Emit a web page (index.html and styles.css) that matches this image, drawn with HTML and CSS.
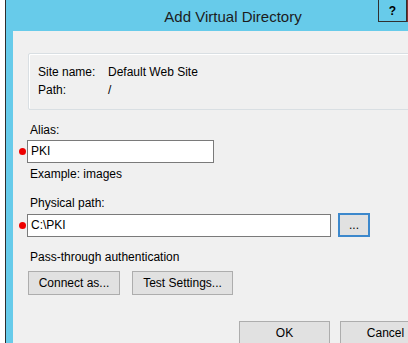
FILE: index.html
```html
<!DOCTYPE html>
<html lang="en">
<head>
    <meta charset="UTF-8">
    <title>Add Virtual Directory</title>
    <link rel="stylesheet" href="styles.css">
</head>
<body>

    <div class="window">
        <div class="titlebar">
            <span class="title">Add Virtual Directory</span>
            <div class="caption-buttons">
                <div class="help-button">?</div>
                <div class="close-button"></div>
            </div>
        </div>

        <div class="client">
            <div class="groupbox">
                <div class="info-row"><span class="info-label">Site name:</span><span>Default Web Site</span></div>
                <div class="info-row"><span class="info-label">Path:</span><span>/</span></div>
            </div>

            <div class="label alias-label">Alias:</div>
            <div class="field-row">
                <span class="marker"></span>
                <div class="textbox alias-box">PKI</div>
            </div>
            <div class="label example">Example: images</div>

            <div class="label path-label">Physical path:</div>
            <div class="field-row">
                <span class="marker"></span>
                <div class="textbox path-box">C:\PKI</div>
                <div class="button browse-button">...</div>
            </div>

            <div class="label auth-label">Pass-through authentication</div>
            <div class="auth-buttons">
                <div class="button connect-button">Connect as...</div>
                <div class="button test-button">Test Settings...</div>
            </div>

            <div class="dialog-buttons">
                <div class="button dialog-button">OK</div>
                <div class="button dialog-button">Cancel</div>
            </div>
        </div>
    </div>

</body>
</html>
```

FILE: styles.css
```css
html {
    overflow: hidden;
}

body {
    margin: 0;
    background-color: #ffffff;
    font-family: "Liberation Sans", Arial, sans-serif;
    font-size: 12px;
    color: #000000;
    overflow: hidden;
    width: 408px;
    height: 343px;
}

.window {
    margin-left: 5px;
    width: 454px;
    height: 400px;
    background-color: #67cbea;
    border-left: 1px solid #2e2e2e;
    position: relative;
}

.titlebar {
    height: 31px;
    display: flex;
    justify-content: center;
    align-items: center;
}

.title {
    font-size: 15px;
    color: #1c1c1c;
    margin-top: 1px;
}

.caption-buttons {
    position: absolute;
    top: -1px;
    left: 372px;
    display: flex;
}

.help-button {
    width: 29px;
    height: 23px;
    border: 1px solid #303030;
    box-sizing: border-box;
    display: flex;
    justify-content: center;
    align-items: center;
    font-weight: bold;
    font-size: 12px;
    padding-top: 1px;
}

.close-button {
    width: 46px;
    height: 23px;
    background-color: #c75050;
    border: 1px solid #803030;
    box-sizing: border-box;
}

.client {
    margin-left: 7px;
    margin-right: 7px;
    height: 369px;
    background-color: #f0f0f0;
    padding-left: 14px;
    padding-right: 22px;
    padding-top: 22px;
    box-sizing: border-box;
    display: flex;
    flex-direction: column;
    align-items: flex-start;
}

.groupbox {
    align-self: stretch;
    margin-left: 1px;
    height: 57px;
    box-sizing: border-box;
    border: 1px solid #d9dfe3;
    box-shadow: inset 1px 1px 0 #ffffff;
    border-radius: 2px;
    padding: 9px 0 0 9px;
}

.info-row {
    display: flex;
    line-height: 18px;
}

.info-label {
    width: 70px;
}

.label {
    line-height: 16px;
    padding-left: 3px;
}

.alias-label {
    margin-top: 12px;
}

.example {
    margin-top: 3px;
}

.path-label {
    margin-top: 13px;
}

.auth-label {
    margin-top: 12px;
}

.field-row {
    display: flex;
    align-items: center;
    margin-left: -8px;
    margin-top: 2px;
}

.marker {
    width: 7px;
    height: 7px;
    border-radius: 50%;
    background-color: #ee0000;
    margin-right: 1px;
}

.textbox {
    height: 23px;
    box-sizing: border-box;
    border: 1px solid #7a7a7a;
    background-color: #ffffff;
    padding-left: 3px;
    line-height: 21px;
}

.alias-box {
    width: 187px;
}

.path-box {
    width: 304px;
}

.button {
    box-sizing: border-box;
    background-color: #e1e1e1;
    border: 1px solid #adadad;
    display: flex;
    justify-content: center;
    align-items: center;
}

.browse-button {
    width: 32px;
    height: 24px;
    margin-left: 7px;
    border: 2px solid #3c88cc;
}

.auth-buttons {
    display: flex;
    gap: 12px;
    margin-top: 6px;
    margin-left: 1px;
}

.connect-button {
    width: 92px;
    height: 24px;
}

.test-button {
    width: 101px;
    height: 24px;
}

.dialog-buttons {
    align-self: stretch;
    display: flex;
    justify-content: flex-end;
    gap: 10px;
    margin-top: 26px;
}

.dialog-button {
    width: 91px;
    height: 24px;
}
```
